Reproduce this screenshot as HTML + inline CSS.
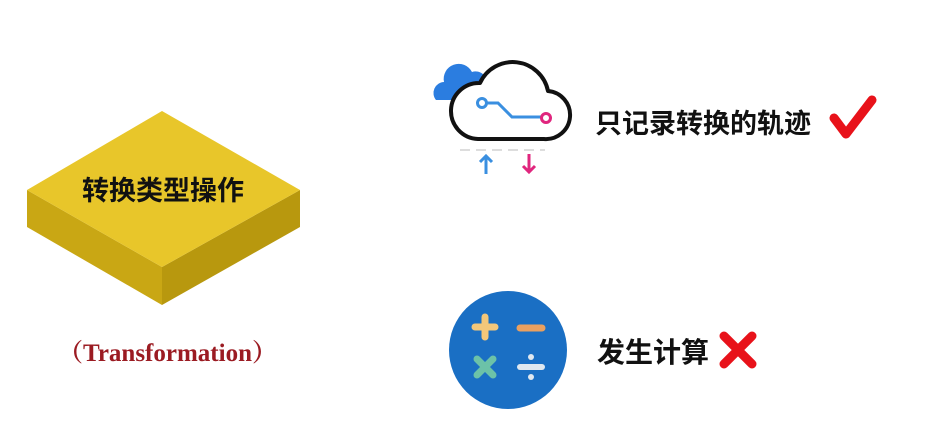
<!DOCTYPE html>
<html><head><meta charset="utf-8"><style>
body{margin:0;width:928px;height:426px;background:#fff;overflow:hidden;position:relative;font-family:"Liberation Sans","Noto Sans CJK SC",sans-serif}
.t{position:absolute;font-weight:bold;color:#111;white-space:nowrap}
</style></head><body>
<svg width="928" height="426" style="position:absolute;left:0;top:0">
 <polygon points="27,190 162,267 162,305 27,227" fill="#c9a714"/>
 <polygon points="162,267 300,190 300,227 162,305" fill="#b8980e"/>
 <polygon points="162,111 300,190 162,267 27,190" fill="#e8c62a"/>
 <path d="M436,100 a11,11 0 0 1 8,-18 a15,15 0 0 1 28,-10 a11,11 0 0 1 14,14 a8,8 0 0 1 0,14 z" fill="#2b7de0"/>
 <path d="M478,139 h66 a24,24 0 0 0 4,-48 a36,36 0 0 0 -68,-8 a28,28 0 0 0 -2,56 z" fill="#fff" stroke="#111" stroke-width="4" stroke-linejoin="round"/>
 <path d="M486,103 h12 l14,14 h30" fill="none" stroke="#3a8fe0" stroke-width="3"/>
 <circle cx="482" cy="103" r="4.5" fill="#fff" stroke="#3a8fe0" stroke-width="3"/>
 <circle cx="546" cy="118" r="4.5" fill="#fff" stroke="#e0267e" stroke-width="3"/>
 <line x1="460" y1="150" x2="545" y2="150" stroke="#ddd" stroke-width="2" stroke-dasharray="10 6"/>
 <path d="M486,174 v-18 M480,162 l6,-6 l6,6" fill="none" stroke="#3a8fe0" stroke-width="3"/>
 <path d="M529,154 v18 M523,166 l6,6 l6,-6" fill="none" stroke="#e0267e" stroke-width="3"/>
 <path d="M834,118 l12,16 l26,-34" fill="none" stroke="#e8121a" stroke-width="9" stroke-linecap="round" stroke-linejoin="round"/>
 <circle cx="508" cy="350" r="59" fill="#1a6fc4"/>
 <path d="M485,317 v20 M475,327 h20" stroke="#f3c77a" stroke-width="7" stroke-linecap="round"/>
 <path d="M520,328 h22" stroke="#e9a060" stroke-width="7" stroke-linecap="round"/>
 <path d="M477,359 l16,16 M493,359 l-16,16" stroke="#6cc2a8" stroke-width="7" stroke-linecap="round"/>
 <path d="M520,367 h22" stroke="#dfe8f0" stroke-width="6" stroke-linecap="round"/>
 <circle cx="531" cy="357" r="3" fill="#dfe8f0"/><circle cx="531" cy="377" r="3" fill="#dfe8f0"/>
 <path d="M724,336 l28,28 M752,336 l-28,28" stroke="#e8121a" stroke-width="9" stroke-linecap="round"/>
</svg>
<div class="t" style="left:82px;top:169px;font-size:27px">转换类型操作</div>
<div class="t" style="left:58px;top:333px;font-size:25px;font-family:'Liberation Serif','Noto Serif CJK SC',serif;color:#9b1b22">（Transformation）</div>
<div class="t" style="left:595px;top:102px;font-size:27px">只记录转换的轨迹</div>
<div class="t" style="left:597px;top:331px;font-size:28px">发生计算</div>
</body></html>
